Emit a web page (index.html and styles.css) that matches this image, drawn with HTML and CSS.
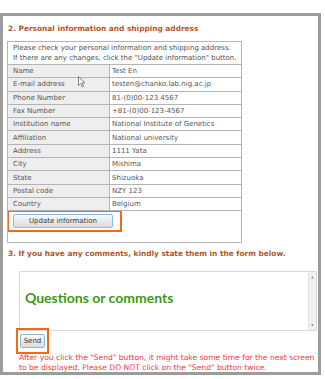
FILE: index.html
```html
<!DOCTYPE html>
<html lang="en">

<head>
    <meta charset="UTF-8">
    <title>Order confirmation</title>
    <link rel="stylesheet" href="styles.css">
</head>

<body>
    <div class="frame">
        <h2 class="step-title step-first">2. Personal information and shipping address</h2>
        <table class="info-table">
            <tr class="intro-row">
                <td class="intro" colspan="2">Please check your personal information and shipping address.<br>If there are any changes, click the "Update information" button.</td>
            </tr>
            <tr><th>Name</th><td>Test En</td></tr>
            <tr><th>E-mail address</th><td>testen@chanko.lab.nig.ac.jp</td></tr>
            <tr><th>Phone Number</th><td>81-(0)00-123 4567</td></tr>
            <tr><th>Fax Number</th><td>+81-(0)00-123-4567</td></tr>
            <tr><th>Institution name</th><td>National Institute of Genetics</td></tr>
            <tr><th>Affiliation</th><td>National university</td></tr>
            <tr><th>Address</th><td>1111 Yata</td></tr>
            <tr><th>City</th><td>Mishima</td></tr>
            <tr><th>State</th><td>Shizuoka</td></tr>
            <tr><th>Postal code</th><td>NZY 123</td></tr>
            <tr><th>Country</th><td>Belgium</td></tr>
            <tr class="action-row">
                <td class="action-cell" colspan="2">
                    <div class="mark mark-update"><button class="btn btn-update">Update information</button></div>
                </td>
            </tr>
        </table>

        <h2 class="step-title step-second">3. If you have any comments, kindly state them in the form below.</h2>
        <div class="comment-box">
            <div class="comment-text">Questions or comments</div>
            <div class="scrollbar"><span>&#9650;</span><span>&#9660;</span></div>
        </div>
        <div class="mark mark-send"><button class="btn btn-send">Send</button></div>
        <p class="warning">After you click the "Send" button, it might take some time for the next screen to be displayed. Please DO NOT click on the "Send" button twice.</p>

        <svg class="cursor" width="8" height="12" viewBox="0 0 8 12">
            <path d="M0.5 0.5 L0.5 9.5 L2.7 7.4 L4.3 11 L5.6 10.4 L4.1 6.9 L7 6.9 Z" fill="#fff" stroke="#808080" stroke-width="1"/>
        </svg>
    </div>
</body>

</html>
```

FILE: styles.css
```css
body {
    margin: 0;
    padding: 13px 0 0 0;
    background: #fff;
    font-family: "DejaVu Sans", Verdana, sans-serif;
}

.frame {
    position: relative;
    width: 311px;
    height: 356px;
    border: 3px solid #9c9c9c;
    padding: 0 0 0 4px;
}

.step-title {
    margin: 0;
    font-size: 7.4px;
    font-weight: bold;
    color: #b0582c;
    line-height: 10px;
    padding-left: 1px;
    white-space: nowrap;
}

.step-first {
    padding-top: 8px;
}

.step-second {
    margin-top: 6px;
}

.info-table {
    margin-top: 7px;
    width: 235px;
    border-collapse: collapse;
    border: 1px solid #a8a8a8;
    font-size: 7px;
    color: #555;
}

.info-table tr {
    height: 13.3px;
}

.info-table th,
.info-table td {
    border: 1px solid #b4b4b4;
    padding: 0 0 0 2px;
    text-align: left;
    font-weight: normal;
    line-height: 10px;
    white-space: nowrap;
}

.info-table th {
    width: 96px;
    padding-left: 5px;
    background: #eeeeee;
}

.info-table .intro-row {
    height: 23px;
}

.info-table .intro {
    padding-left: 5px;
    color: #505050;
}

.info-table .action-row {
    height: 32px;
}

.info-table .action-cell {
    padding: 0;
    vertical-align: top;
}

.mark {
    display: block;
    width: max-content;
    border: 2px solid #f26b12;
}

.mark-update {
    margin: -1px 0 0 -1px;
    padding: 2px 7px 2px 4px;
}

.btn {
    display: block;
    font-family: "DejaVu Sans", Verdana, sans-serif;
    font-size: 7px;
    color: #333;
    border: 1px solid #86b9e2;
    border-radius: 2px;
    background: linear-gradient(#fafafa, #dcdcdc);
    padding: 0;
}

.btn-update {
    width: 100px;
    height: 14px;
}

.comment-box {
    margin: 12px 0 0 12px;
    width: 296px;
    height: 58px;
    border: 1px solid #d8d8d8;
    display: flex;
    justify-content: space-between;
}

.comment-text {
    padding: 17px 0 0 5px;
    font-family: Lato, "Open Sans", sans-serif;
    font-size: 14px;
    line-height: 17px;
    font-weight: bold;
    color: #3c9a14;
}

.scrollbar {
    width: 7px;
    background: #f0f0f0;
    border-left: 1px solid #e2e2e2;
    display: flex;
    flex-direction: column;
    justify-content: space-between;
    align-items: center;
    font-size: 3px;
    line-height: 4px;
    color: #888;
    padding: 3px 0;
}

.mark-send {
    margin: -3px 0 0 9px;
    padding: 4px 2px;
}

.btn-send {
    width: 25px;
    height: 14px;
    font-size: 7px;
}

.warning {
    margin: -1.5px 0 0 12px;
    width: 298px;
    font-size: 7.6px;
    line-height: 10.6px;
    color: #f03c3c;
}

.cursor {
    position: absolute;
    left: 75px;
    top: 60px;
}
```
